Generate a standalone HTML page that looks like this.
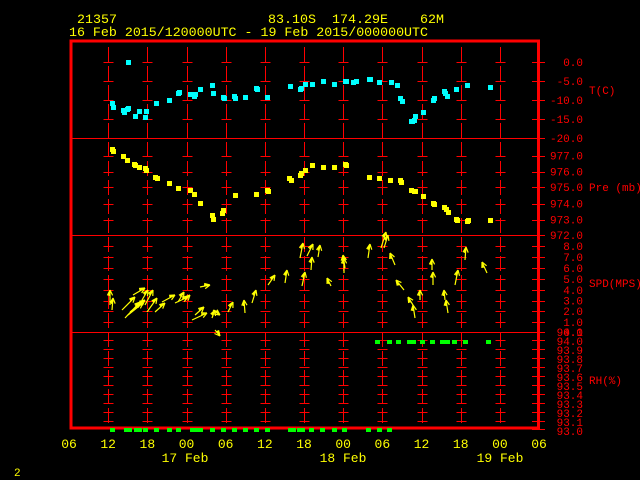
<!DOCTYPE html>
<html><head><meta charset="utf-8"><style>
html,body{margin:0;padding:0;background:#000;width:640px;height:480px;overflow:hidden}
svg{display:block}
text{font-family:"Liberation Mono",monospace}
</style></head><body>
<svg id="s" width="640" height="480" viewBox="0 0 640 480" xmlns="http://www.w3.org/2000/svg">
<rect width="640" height="480" fill="#000"/>
<g fill="#ffff00" font-size="13">
<text x="77" y="23" textLength="40" lengthAdjust="spacingAndGlyphs">21357</text>
<text x="268" y="23" textLength="176" lengthAdjust="spacingAndGlyphs" xml:space="preserve">83.10S  174.29E    62M</text>
<text x="69" y="36" textLength="359" lengthAdjust="spacingAndGlyphs">16 Feb 2015/120000UTC - 19 Feb 2015/000000UTC</text>
</g>
<g id="grid" stroke="#ff0000" stroke-width="1" fill="none"></g>
<g stroke="#ff0000" fill="none">
<rect x="71" y="41" width="467.5" height="387" stroke-width="3"/>
<line x1="71" y1="138.5" x2="539" y2="138.5"/>
<line x1="71" y1="235.5" x2="539" y2="235.5"/>
<line x1="71" y1="332.5" x2="539" y2="332.5"/>
</g>
<g id="lab" fill="#ff0000" font-size="11" text-anchor="end"></g>
<g fill="#ff0000" font-size="11">
<text x="589" y="94">T(C)</text>
<text x="589" y="191">Pre (mb)</text>
<text x="589" y="287">SPD(MPS)</text>
<text x="589" y="384">RH(%)</text>
</g>
<g id="pts"></g>
<g id="wind" stroke="#ffff00" stroke-width="1.2" fill="none"></g>
<g fill="#ffff00" font-size="13" text-anchor="middle" id="bot">
<text x="185" y="462">17 Feb</text>
<text x="343" y="462">18 Feb</text>
<text x="500" y="462">19 Feb</text>
</g>
<text x="14" y="476" fill="#ffff00" font-size="11">2</text>
</svg>
<script>
var NS="http://www.w3.org/2000/svg";
function el(p,t,a,txt){var e=document.createElementNS(NS,t);for(var k in a)e.setAttribute(k,a[k]);if(txt!=null)e.textContent=txt;document.getElementById(p).appendChild(e);return e;}
var X=function(i){return 69+39.17*i;};
var ys=[62,81,100,119,155.5,171.5,187,203.5,219.5,246,257,268,279,290,300.5,311,322,340,349,358,367,376,385,394,403,412,421];
for(var i=1;i<=11;i++){var x=Math.round(X(i))+0.5;
 el("grid","line",{x1:x,y1:47,x2:x,y2:427,"stroke-dasharray":"15,4"});
 ys.forEach(function(y){el("grid","line",{x1:x-5,y1:Math.round(y)+0.5,x2:x+5,y2:Math.round(y)+0.5});});
}
ys.concat([138,235,332,429]).forEach(function(y){el("grid","line",{x1:532,y1:Math.round(y)+0.5,x2:545,y2:Math.round(y)+0.5});});
var labs=[["0.0",62],["-5.0",81],["-10.0",100],["-15.0",119],["-20.0",138],["977.0",155.5],["976.0",171.5],["975.0",187],["974.0",203.5],["973.0",219.5],["972.0",235],["8.0",246],["7.0",257],["6.0",268],["5.0",279],["4.0",290],["3.0",300.5],["2.0",311],["1.0",322],["0.0",332],["94.1",332],["94.0",341],["93.9",350],["93.8",359],["93.7",368],["93.6",377],["93.5",386],["93.4",395],["93.3",404],["93.2",413],["93.1",422],["93.0",431]];
labs.forEach(function(l){el("lab","text",{x:583,y:l[1]+4},l[0]);});
var bl=["06","12","18","00","06","12","18","00","06","12","18","00","06"];
bl.forEach(function(t,i){el("bot","text",{x:X(i),y:448},t);});
var T=[[128,62],[112,103],[113,107],[123,110],[124,112],[127,109],[128,108],[139,111],[135,116],[145,117],[146,111],[156,103],[169,100],[178,93],[179,92],[190,94],[194,96],[195,94],[200,89],[212,85],[213,93],[223,97],[224,98],[234,96],[235,98],[245,97],[256,88],[257,89],[267,97],[290,86],[300,89],[301,88],[305,84],[312,84],[323,81],[334,84],[345,81],[346,81],[353,82],[356,81],[369,79],[370,79],[379,82],[391,82],[397,85],[400,98],[402,101],[411,121],[412,121],[414,120],[415,116],[423,112],[433,100],[434,98],[444,91],[445,93],[447,96],[456,89],[467,85],[490,87]];
T.forEach(function(p){el("pts","rect",{x:p[0]-2,y:p[1]-2,width:5,height:5,fill:"#00ffff"});});
var P=[[112,149],[113,151],[123,156],[127,160],[134,164],[135,165],[139,167],[145,168],[146,170],[155,177],[157,178],[169,183],[178,188],[190,190],[194,194],[200,203],[212,215],[213,219],[222,213],[223,210],[235,195],[256,194],[267,190],[268,191],[289,178],[291,180],[300,175],[301,173],[305,170],[312,165],[323,167],[334,167],[345,164],[346,165],[369,177],[379,178],[390,180],[400,180],[401,182],[411,190],[414,191],[415,191],[423,196],[433,203],[434,204],[444,207],[446,209],[448,212],[456,219],[457,220],[467,221],[468,220],[490,220]];
P.forEach(function(p){el("pts","rect",{x:p[0]-2,y:p[1]-2,width:5,height:5,fill:"#ffff00"});});
var G=[112,126,129,136,139,145,156,169,178,192,195,200,212,223,234,245,256,267,290,293,299,302,311,322,334,344,368,379,389];
G.forEach(function(x){el("pts","rect",{x:x-2,y:428,width:5,height:4,fill:"#00ff00"});});
[377,389,398,409,413,422,432,442,447,454,465,488].forEach(function(x){el("pts","rect",{x:x-2,y:340,width:5,height:4,fill:"#00ff00"});});
var W=[[110,305,110,290],[112,310,113,298],[125,318,140,302],[128,315,143,303],[130,312,145,300],[122,310,135,297],[133,295,145,288],[142,300,148,290],[145,305,153,290],[147,312,157,298],[155,312,165,303],[162,302,175,295],[175,303,188,297],[178,302,184,292],[185,300,190,295],[195,315,204,307],[192,320,207,313],[200,287,210,285],[213,310,220,315],[212,318,215,310],[215,330,220,336],[228,312,233,302],[245,313,244,300],[252,303,256,290],[268,285,275,275],[285,283,287,270],[302,286,305,272],[300,258,303,243],[307,256,313,244],[311,270,312,257],[318,257,320,245],[331,286,327,278],[345,268,343,255],[344,273,344,258],[368,258,370,244],[381,248,386,232],[384,248,388,235],[395,265,390,253],[404,290,396,280],[413,305,408,297],[415,318,413,305],[420,300,420,290],[433,285,433,272],[432,270,432,259],[445,300,444,290],[448,313,446,300],[455,285,458,270],[465,260,466,247],[487,273,482,262]];
W.forEach(function(w){var x1=w[0],y1=w[1],x2=w[2],y2=w[3];var a=Math.atan2(y2-y1,x2-x1);
 var d="M"+x1+" "+y1+"L"+x2+" "+y2;
 d+="M"+x2+" "+y2+"L"+(x2-6*Math.cos(a+0.45)).toFixed(1)+" "+(y2-6*Math.sin(a+0.45)).toFixed(1);
 d+="M"+x2+" "+y2+"L"+(x2-6*Math.cos(a-0.45)).toFixed(1)+" "+(y2-6*Math.sin(a-0.45)).toFixed(1);
 d+="M"+x2+" "+y2+"L"+(x2-6*Math.cos(a+0.2)).toFixed(1)+" "+(y2-6*Math.sin(a+0.2)).toFixed(1);
 el("wind","path",{d:d});});
</script>
</body></html>
